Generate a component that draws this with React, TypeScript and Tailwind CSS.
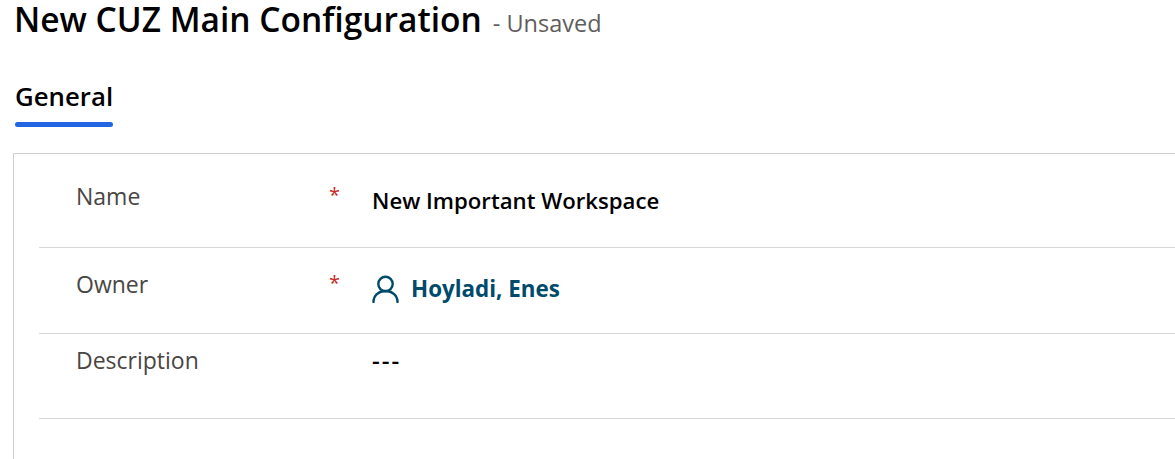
function Row({ label, required, height, labelTop, children }: { label: string; required?: boolean; height: string; labelTop: string; children: React.ReactNode }) {
  return (
    <div className={`flex border-b border-[#d8d8d8] ${height}`}>
      <div className={`w-[333px] flex shrink-0 pl-[37px] text-[23px] leading-[32px] text-[#484644] ${labelTop}`}>
        <span className="w-[253px] shrink-0">{label}</span>
        {required && <span className="text-[20px] leading-[30px] text-[#c8281e]">*</span>}
      </div>
      {children}
    </div>
  );
}

export default function App() {
  return (
    <div className="w-[1175px] h-[459px] bg-white overflow-hidden font-['Open_Sans',sans-serif]">
      <div className="flex items-baseline pl-[14px] -mt-[2px] h-[46px]">
        <h1 className="text-[33.5px] leading-[42px] font-semibold text-black whitespace-nowrap">New CUZ Main Configuration</h1>
        <span className="ml-[11px] text-[23.5px] leading-[32px] text-[#605e5c] whitespace-nowrap">- Unsaved</span>
      </div>
      <div className="pl-[15px] mt-[33px]">
        <div className="inline-block align-top">
          <div className="text-[25.8px] leading-[38px] font-semibold text-black">General</div>
          <div className="h-[5px] w-[98px] rounded-[3px] bg-[#2266e3] mt-[7px]" />
        </div>
      </div>
      <div className="ml-[13px] mt-[26px] border-l border-t border-[#d1d1d1] h-[400px] pl-[25px]">
        <Row label="Name" required height="h-[94px]" labelTop="pt-[26px]">
          <div className="pt-[31px] text-[22.2px] leading-[32px] font-semibold text-black whitespace-nowrap">New Important Workspace</div>
        </Row>
        <Row label="Owner" required height="h-[86px]" labelTop="pt-[20px]">
          <div className="pt-[24px] flex items-center h-[57px]">
            <svg width="27" height="28" viewBox="0 0 27 28" fill="none" stroke="#004b6b" strokeWidth="2.4" strokeLinecap="round">
              <circle cx="13.5" cy="9" r="7.2" />
              <path d="M1.5 27c0-6.500 5-11 12-11s12 4.500 12 11" />
            </svg>
            <span className="ml-[12px] text-[22.4px] leading-[32px] font-bold text-[#004b6b] whitespace-nowrap">Hoyladi, Enes</span>
          </div>
        </Row>
        <Row label="Description" height="h-[85px]" labelTop="pt-[10px]">
          <div className="pt-[10px] text-[24px] leading-[32px] font-semibold tracking-[2px] text-black">---</div>
        </Row>
      </div>
    </div>
  );
}
